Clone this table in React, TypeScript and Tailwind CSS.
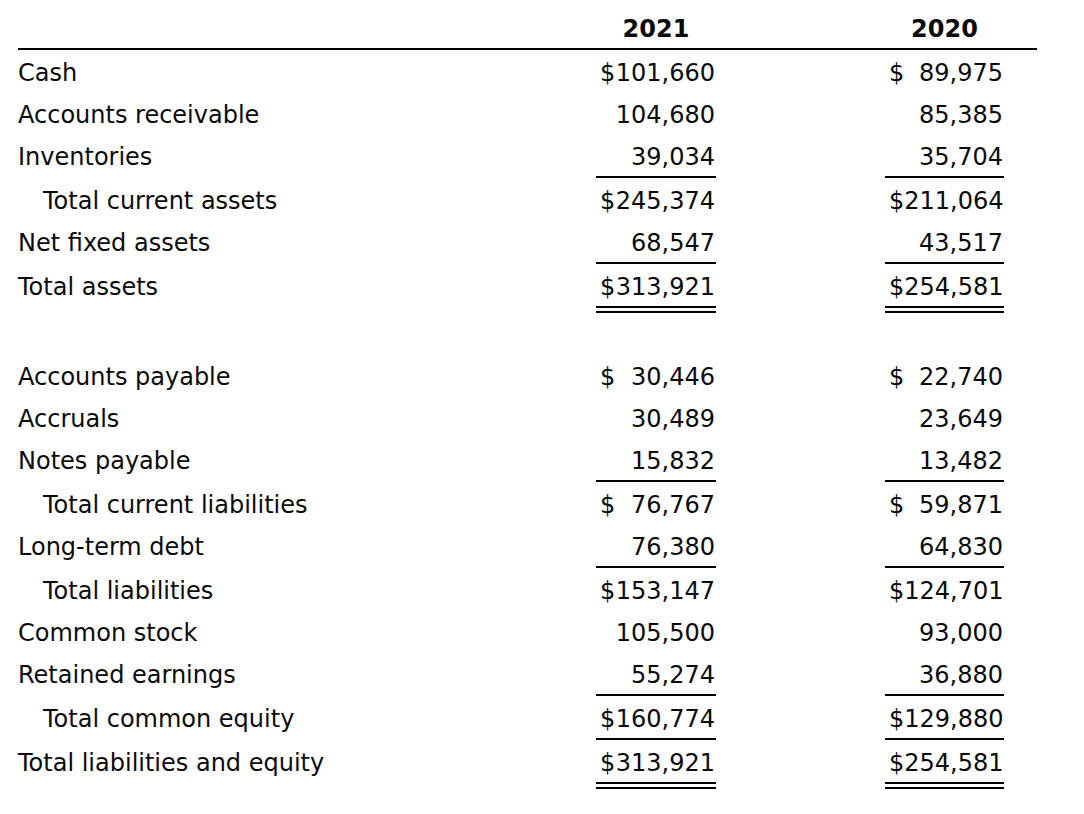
import React from "react";

type Row = {
  label: string;
  indent?: boolean;
  v1: [string, string];
  v2: [string, string];
  line?: "single" | "double";
};

const assets: Row[] = [
  { label: "Cash", v1: ["$", "101,660"], v2: ["$", "89,975"] },
  { label: "Accounts receivable", v1: ["", "104,680"], v2: ["", "85,385"] },
  { label: "Inventories", v1: ["", "39,034"], v2: ["", "35,704"], line: "single" },
  { label: "Total current assets", indent: true, v1: ["$", "245,374"], v2: ["$", "211,064"] },
  { label: "Net fixed assets", v1: ["", "68,547"], v2: ["", "43,517"], line: "single" },
  { label: "Total assets", v1: ["$", "313,921"], v2: ["$", "254,581"], line: "double" },
];

const liabilities: Row[] = [
  { label: "Accounts payable", v1: ["$", "30,446"], v2: ["$", "22,740"] },
  { label: "Accruals", v1: ["", "30,489"], v2: ["", "23,649"] },
  { label: "Notes payable", v1: ["", "15,832"], v2: ["", "13,482"], line: "single" },
  { label: "Total current liabilities", indent: true, v1: ["$", "76,767"], v2: ["$", "59,871"] },
  { label: "Long-term debt", v1: ["", "76,380"], v2: ["", "64,830"], line: "single" },
  { label: "Total liabilities", indent: true, v1: ["$", "153,147"], v2: ["$", "124,701"] },
  { label: "Common stock", v1: ["", "105,500"], v2: ["", "93,000"] },
  { label: "Retained earnings", v1: ["", "55,274"], v2: ["", "36,880"], line: "single" },
  { label: "Total common equity", indent: true, v1: ["$", "160,774"], v2: ["$", "129,880"], line: "single" },
  { label: "Total liabilities and equity", v1: ["$", "313,921"], v2: ["$", "254,581"], line: "double" },
];

function Cell({ v, line, width }: { v: [string, string]; line?: "single" | "double"; width: string }) {
  const border =
    line === "single"
      ? "border-b-2 border-solid border-black"
      : line === "double"
      ? "border-b-[7px] border-double border-black"
      : "";
  return (
    <div className={`${width} ${border} flex justify-between pl-[4px] pr-[1px] pt-[5px] leading-[37px] shrink-0`}>
      <span>{v[0]}</span>
      <span>{v[1]}</span>
    </div>
  );
}

function RowView({ r }: { r: Row }) {
  return (
    <div className="flex items-start">
      <div className={`w-[578px] shrink-0 pt-[5px] leading-[37px] ${r.indent ? "pl-[25px]" : ""}`}>{r.label}</div>
      <Cell v={r.v1} line={r.line} width="w-[120px]" />
      <div className="w-[169px] shrink-0" />
      <Cell v={r.v2} line={r.line} width="w-[119px]" />
    </div>
  );
}

export default function App() {
  return (
    <div
      className="w-[1084px] h-[814px] bg-white text-[#0a0a0a] text-[24px] pl-[18px]"
      style={{ fontFamily: '"DejaVu Sans", Verdana, sans-serif' }}
    >
      <div className="w-[1019px] flex border-b-2 border-black h-[50px] font-bold">
        <div className="w-[578px] shrink-0" />
        <div className="w-[120px] shrink-0 text-center pt-[10px] leading-[38px]">2021</div>
        <div className="w-[169px] shrink-0" />
        <div className="w-[119px] shrink-0 text-center pt-[10px] leading-[38px]">2020</div>
      </div>
      {assets.map((r) => (
        <RowView key={r.label} r={r} />
      ))}
      <div className="h-[41px]" />
      {liabilities.map((r) => (
        <RowView key={r.label} r={r} />
      ))}
    </div>
  );
}
